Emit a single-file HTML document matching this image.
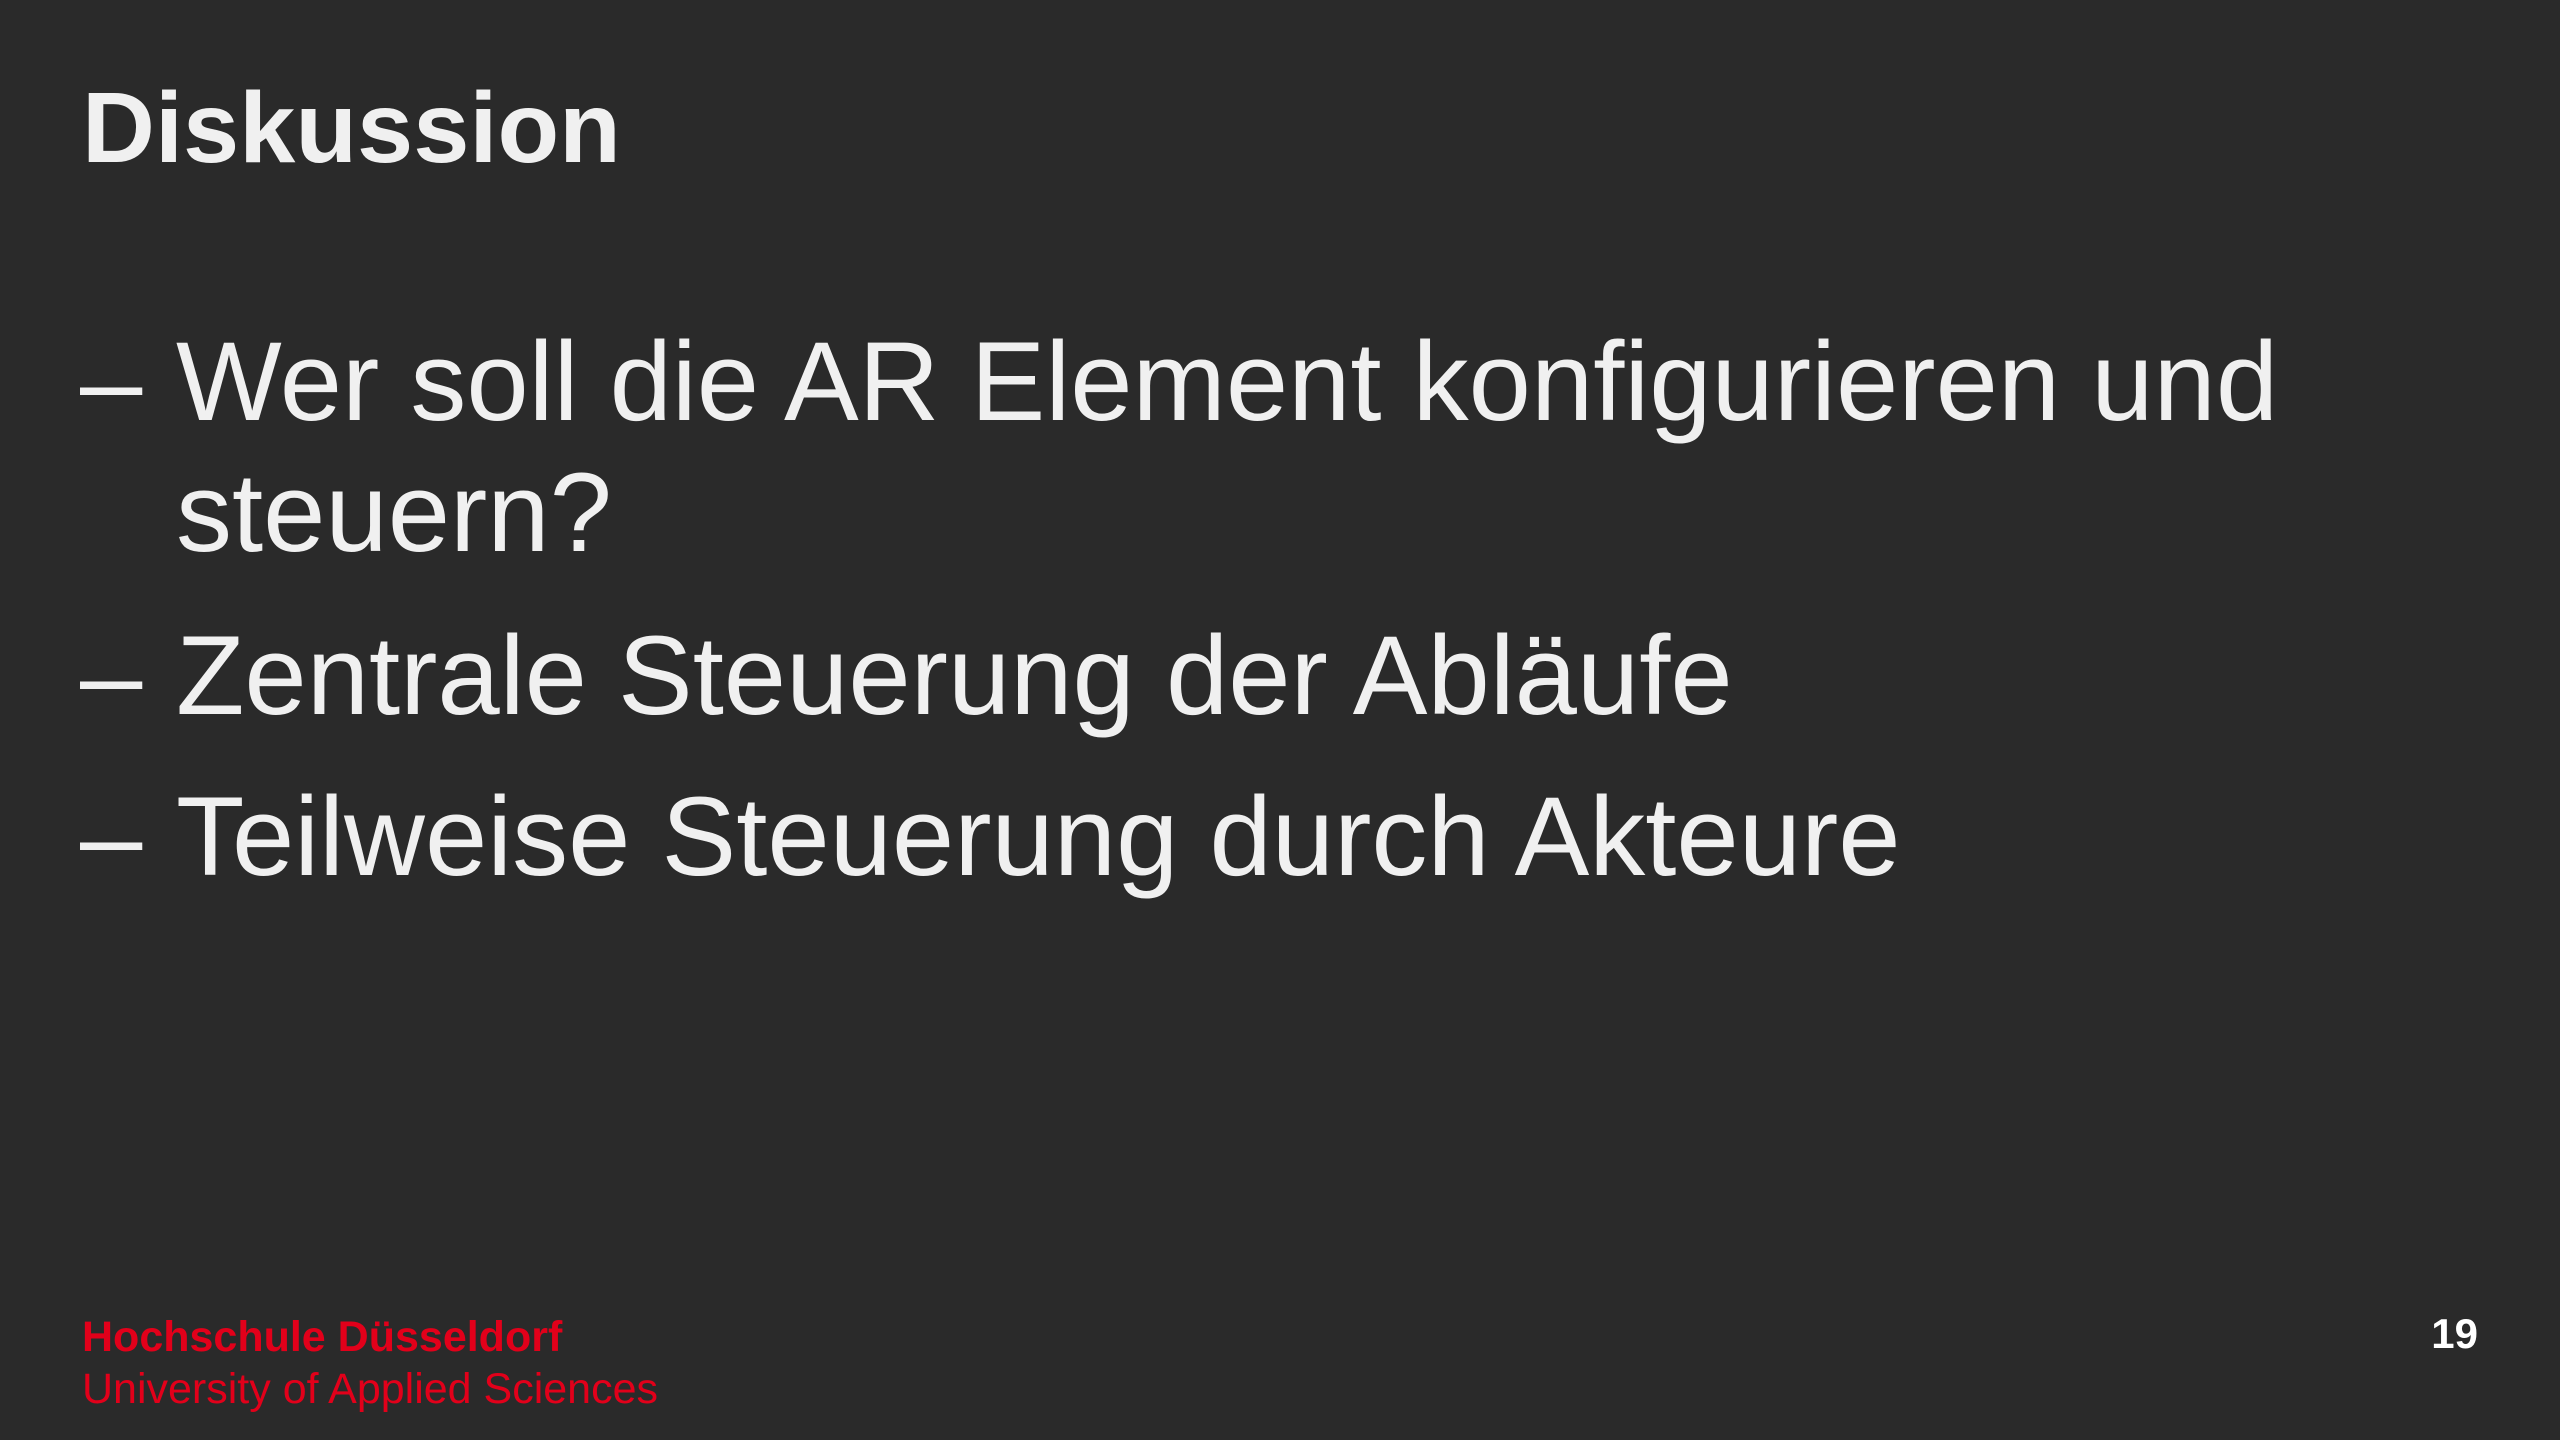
<!DOCTYPE html>
<html><head><meta charset="utf-8"><style>
html,body{margin:0;padding:0}
body{width:2560px;height:1440px;background:#2a2a2a;position:relative;overflow:hidden;font-family:"Liberation Sans",Arial,sans-serif;color:#f0f0f0}
.t{position:absolute;white-space:nowrap;line-height:1}
.title{left:82px;top:78px;font-size:100px;font-weight:bold;transform:scaleX(1.01);transform-origin:left top}
.b{font-size:112px;}
.f{color:#e2001a;font-size:43px;}
</style></head><body>
<div class="t title">Diskussion</div>
<div class="t b" style="left:80px;top:326px">–</div>
<div class="t b" style="left:176px;top:326px">Wer soll die AR Element konfigurieren und</div>
<div class="t b" style="left:176px;top:457px">steuern?</div>
<div class="t b" style="left:80px;top:620px">–</div>
<div class="t b" style="left:176px;top:620px">Zentrale Steuerung der Abläufe</div>
<div class="t b" style="left:80px;top:781px">–</div>
<div class="t b" style="left:176px;top:781px">Teilweise Steuerung durch Akteure</div>
<div class="t f" style="left:82px;top:1316px;font-weight:bold">Hochschule Düsseldorf</div>
<div class="t f" style="left:82px;top:1368px">University of Applied Sciences</div>
<div class="t" style="right:82px;top:1313px;font-size:42px;font-weight:bold;color:#fff">19</div>
</body></html>
